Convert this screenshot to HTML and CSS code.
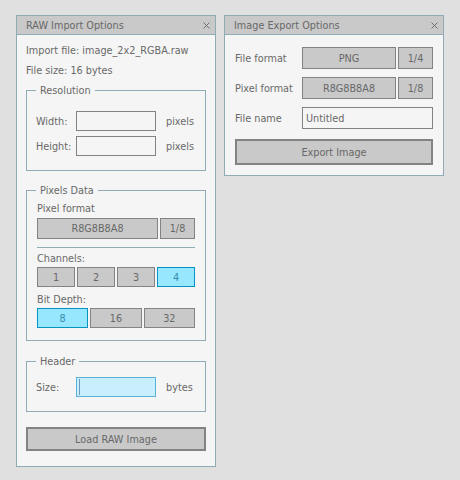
FILE: index.html
```html
<!DOCTYPE html>
<html lang="en">
<head>
<meta charset="utf-8">
<title>RAW Import / Image Export</title>
<link rel="stylesheet" href="styles.css">
</head>
<body>
<div class="desk">
  <section class="win win-import">
    <header class="titlebar">
      <span class="title">RAW Import Options</span>
      <svg class="close" width="7" height="7" viewBox="0 0 7 7"><path d="M0.5 0.5L6.5 6.5M6.5 0.5L0.5 6.5"/></svg>
    </header>
    <div class="win-body body-import">
      <div class="info info-first">Import file: image_2x2_RGBA.raw</div>
      <div class="info">File size: 16 bytes</div>

      <div class="group g-res">
        <span class="group-title">Resolution</span>
        <div class="field-row">
          <span class="flabel">Width:</span>
          <div class="textbox"></div>
          <span class="unit">pixels</span>
        </div>
        <div class="field-row">
          <span class="flabel">Height:</span>
          <div class="textbox"></div>
          <span class="unit">pixels</span>
        </div>
      </div>

      <div class="group g-pix">
        <span class="group-title">Pixels Data</span>
        <div class="plabel">Pixel format</div>
        <div class="spin-row">
          <div class="btn btn-wide">R8G8B8A8</div>
          <div class="btn btn-count">1/8</div>
        </div>
        <div class="sep"></div>
        <div class="plabel plabel-gap">Channels:</div>
        <div class="toggles toggles-4">
          <div class="btn">1</div>
          <div class="btn">2</div>
          <div class="btn">3</div>
          <div class="btn active">4</div>
        </div>
        <div class="plabel plabel-gap2">Bit Depth:</div>
        <div class="toggles toggles-3">
          <div class="btn active">8</div>
          <div class="btn">16</div>
          <div class="btn">32</div>
        </div>
      </div>

      <div class="group g-head">
        <span class="group-title">Header</span>
        <div class="field-row">
          <span class="flabel">Size:</span>
          <div class="textbox focused"><span class="cursor"></span></div>
          <span class="unit">bytes</span>
        </div>
      </div>

      <div class="btn big-btn load-btn">Load RAW Image</div>
    </div>
  </section>

  <section class="win win-export">
    <header class="titlebar">
      <span class="title">Image Export Options</span>
      <svg class="close" width="7" height="7" viewBox="0 0 7 7"><path d="M0.5 0.5L6.5 6.5M6.5 0.5L0.5 6.5"/></svg>
    </header>
    <div class="win-body body-export">
      <div class="exp-row">
        <span class="elabel">File format</span>
        <div class="btn exp-wide">PNG</div>
        <div class="btn exp-count">1/4</div>
      </div>
      <div class="exp-row">
        <span class="elabel">Pixel format</span>
        <div class="btn exp-wide">R8G8B8A8</div>
        <div class="btn exp-count">1/8</div>
      </div>
      <div class="exp-row">
        <span class="elabel">File name</span>
        <div class="textbox exp-text">Untitled</div>
      </div>
      <div class="btn big-btn export-btn">Export Image</div>
    </div>
  </section>
</div>
</body>
</html>
```

FILE: styles.css
```css
* { box-sizing: border-box; }

html, body { margin: 0; padding: 0; }

body {
  width: 460px;
  height: 480px;
  overflow: hidden;
  background: #e0e0e0;
  font-family: "DejaVu Sans", "Liberation Sans", sans-serif;
  font-size: 9.7px;
  color: #686868;
}

.desk {
  display: flex;
  align-items: flex-start;
  gap: 8px;
  padding: 15px 0 0 16px;
}

.win {
  background: #f5f5f5;
  border: 1px solid #90abb5;
  display: flex;
  flex-direction: column;
}

.win-import { width: 200px; height: 452px; }
.win-export { width: 220px; height: 161px; }

.titlebar {
  height: 19px;
  flex: none;
  background: #c9c9c9;
  border-bottom: 1px solid #90abb5;
  display: flex;
  align-items: center;
  justify-content: space-between;
  padding: 2px 5px 0 9px;
}

.title { line-height: 12px; }

.close { display: block; margin-top: -1px; }
.close path { stroke: #6e6e6e; stroke-width: 1; fill: none; }

.win-body { display: flex; flex-direction: column; }

.body-import { padding: 0 9px; }

.info {
  height: 20px;
  line-height: 20px;
  white-space: nowrap;
}
.info-first { margin-top: 6px; }

/* group boxes */
.group {
  position: relative;
  border: 1px solid #90abb5;
}
.group-title {
  position: absolute;
  top: -6px;
  left: 9px;
  padding: 0 4px;
  line-height: 12px;
  background: #f5f5f5;
}

.g-res {
  margin-top: 9px;
  padding: 20px 9px 14px;
  display: flex;
  flex-direction: column;
  gap: 5px;
}

.field-row {
  display: flex;
  align-items: center;
  height: 20px;
}
.flabel { width: 40px; }
.unit { margin-left: 10px; }

.textbox {
  width: 80px;
  height: 20px;
  border: 1px solid #838383;
  background: #f5f5f5;
}
.textbox.focused {
  background: #c9effe;
  border-color: #5bb2d9;
  display: flex;
  align-items: center;
}
.cursor {
  width: 1px;
  height: 16px;
  margin-left: 2px;
  background: #6c9bbc;
}

.g-pix {
  margin-top: 19px;
  padding: 12px 10px 12px;
}
.plabel { height: 12px; line-height: 12px; }
.plabel-gap { margin-top: 5px; }
.plabel-gap2 { margin-top: 7px; }

.spin-row {
  margin-top: 3px;
  height: 21px;
  display: flex;
  gap: 2px;
}

.btn {
  background: #c9c9c9;
  border: 1px solid #838383;
  color: #686868;
  display: flex;
  align-items: center;
  justify-content: center;
  white-space: nowrap;
}
.btn.active {
  background: #97e8ff;
  border-color: #0492c7;
  color: #368baf;
}

.btn-wide { width: 121px; }
.btn-count { width: 35px; }

.sep {
  margin-top: 8px;
  height: 1px;
  background: #90abb5;
}

.toggles {
  margin-top: 2px;
  height: 20px;
  display: grid;
  gap: 2px;
}
.toggles-4 { grid-template-columns: repeat(4, 1fr); }
.toggles-3 { grid-template-columns: repeat(3, 1fr); }

.g-head {
  margin-top: 20px;
  padding: 15px 9px 14px;
}

.big-btn {
  border-width: 2px;
}
.load-btn {
  margin-top: 15px;
  height: 24px;
}

/* export window */
.body-export {
  padding: 12px 10px 10px;
}
.exp-row {
  display: flex;
  align-items: center;
  height: 22px;
  margin-bottom: 8px;
}
.elabel { width: 67px; white-space: nowrap; }
.exp-wide { width: 94px; height: 22px; }
.exp-count { width: 35px; height: 22px; margin-left: 2px; }
.exp-text {
  width: 131px;
  height: 22px;
  display: flex;
  align-items: center;
  padding-left: 3px;
}
.exp-row:nth-child(3) { margin-bottom: 10px; }
.export-btn { height: 26px; }
```
